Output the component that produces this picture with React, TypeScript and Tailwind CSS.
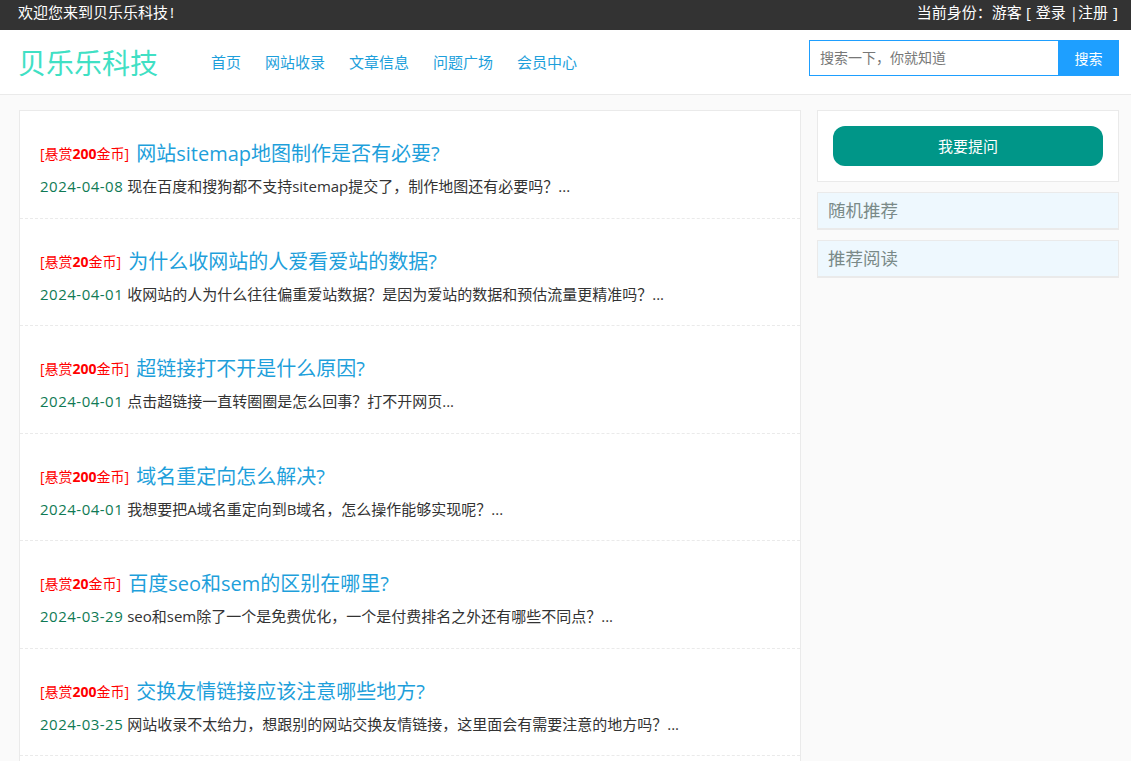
const font = '"Open Sans","Noto Sans CJK SC",sans-serif';
const items = [
  { r: "200", t: "网站sitemap地图制作是否有必要?", d: "2024-04-08", s: "现在百度和搜狗都不支持sitemap提交了，制作地图还有必要吗？..." },
  { r: "20", t: "为什么收网站的人爱看爱站的数据?", d: "2024-04-01", s: "收网站的人为什么往往偏重爱站数据？是因为爱站的数据和预估流量更精准吗？..." },
  { r: "200", t: "超链接打不开是什么原因?", d: "2024-04-01", s: "点击超链接一直转圈圈是怎么回事？打不开网页..." },
  { r: "200", t: "域名重定向怎么解决?", d: "2024-04-01", s: "我想要把A域名重定向到B域名，怎么操作能够实现呢？..." },
  { r: "20", t: "百度seo和sem的区别在哪里?", d: "2024-03-29", s: "seo和sem除了一个是免费优化，一个是付费排名之外还有哪些不同点？..." },
  { r: "200", t: "交换友情链接应该注意哪些地方?", d: "2024-03-25", s: "网站收录不太给力，想跟别的网站交换友情链接，这里面会有需要注意的地方吗？..." },
];
const nav = ["首页", "网站收录", "文章信息", "问题广场", "会员中心"];

export default function App() {
  return (
    <div className="h-[761px] overflow-hidden bg-[#fafafa] text-[14px] text-[#333]" style={{ fontFamily: font }}>
      <div className="flex h-[30px] items-center justify-between bg-[#333] pb-[5px] pl-[18px] pr-[13px] text-[15px] text-white">
        <span>欢迎您来到贝乐乐科技<span className="ml-[2px]">!</span></span>
        <span className="flex">
          <span>当前身份：游客</span>
          <span className="ml-[4px]">[</span>
          <span className="ml-[5px]">登录</span>
          <span className="ml-[4px]">|</span>
          <span>注册</span>
          <span className="ml-[5px]">]</span>
        </span>
      </div>
      <header className="flex h-[65px] items-center border-b border-[#eaeaea] bg-white pl-[18px] pr-[12px]">
        <div className="w-[193px] pt-[2px] text-[28px] leading-[40px] text-[#40e0c4]">贝乐乐科技</div>
        <nav className="flex gap-[24px] text-[15px] text-[#1e9fdb]">
          {nav.map((n) => <a key={n}>{n}</a>)}
        </nav>
        <div className="ml-auto flex h-[36px] w-[310px] -translate-y-[4px]">
          <div className="flex flex-1 items-center border border-r-0 border-[#1e9fff] bg-white pb-[2px] pl-[10px] text-[14px] text-[#777]">搜索一下，你就知道</div>
          <div className="flex w-[61px] items-center justify-center bg-[#1e9fff] text-[14px] text-white">搜索</div>
        </div>
      </header>
      <main className="flex items-start gap-[16px] pl-[19px] pr-[12px] pt-[15px]">
        <section className="h-[700px] w-[782px] border border-[#eaeaea] bg-white">
          {items.map((it, i) => (
            <article key={i} className="h-[107.5px] border-b border-dashed border-[#eaeaea] px-[20px] pt-[28px]">
              <div className="flex items-center leading-[30px]">
                <span className="mr-[7px] text-[14px] text-[#f00]">[悬赏<b>{it.r}</b>金币]</span>
                <a className="text-[20px] text-[#1e9fdb]">{it.t}</a>
              </div>
              <p className="mt-[6px] text-[15px] leading-[22px]">
                <span className="tracking-[0.5px] text-[#0f7a55]">{it.d}</span> <span>{it.s}</span>
              </p>
            </article>
          ))}
        </section>
        <aside className="flex w-[302px] flex-col gap-[10px]">
          <div className="border border-[#eaeaea] bg-white p-[15px]">
            <div className="flex h-[40px] items-center justify-center rounded-[12px] bg-[#009688] text-[15px] text-white">我要提问</div>
          </div>
          {["随机推荐", "推荐阅读"].map((t) => (
            <div key={t} className="h-[38px] border border-b-[2px] border-[#eaeaea] bg-[#eef8fe] pl-[10px] text-[17.5px] leading-[35px] text-[#7a8a88]">{t}</div>
          ))}
        </aside>
      </main>
    </div>
  );
}
